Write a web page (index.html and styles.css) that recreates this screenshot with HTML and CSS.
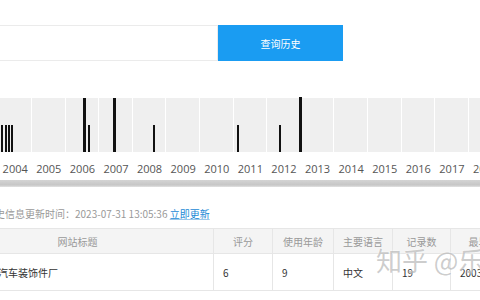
FILE: index.html
```html
<!DOCTYPE html>
<html>
	<head>
		<meta charset="UTF-8"/>
		<title>网站历史查询</title>
		<link rel="stylesheet" href="styles.css">
	</head>
	<body>
		<form class="search" action="./" method="get">
			<input class="search-input" type="text" name="domain" />
			<button class="search-btn" type="button">查询历史</button>
		</form>

		<!-- one column per year, bars placed by their date -->
		<div class="chart">
			<div class="plot">
				<div class="col"></div><div class="col"></div><div class="col"></div>
				<div class="col"></div><div class="col"></div><div class="col"></div>
				<div class="col"></div><div class="col"></div><div class="col"></div>
				<div class="col"></div><div class="col"></div><div class="col"></div>
				<div class="col"></div><div class="col"></div><div class="col"></div>
				<span class="bar" style="left:3px;height:27px"></span>
				<span class="bar" style="left:6.5px;height:27px"></span>
				<span class="bar" style="left:10px;height:27px"></span>
				<span class="bar" style="left:13px;height:27px"></span>
				<span class="bar tall" style="left:84.5px;height:54px"></span>
				<span class="bar" style="left:90px;height:27px"></span>
				<span class="bar tall" style="left:115px;height:54px"></span>
				<span class="bar" style="left:154.5px;height:27px"></span>
				<span class="bar" style="left:238.5px;height:27px"></span>
				<span class="bar" style="left:281px;height:27px"></span>
				<span class="bar tall" style="left:300.5px;height:55px"></span>
			</div>
			<div class="years">
				<span>2004</span><span>2005</span><span>2006</span><span>2007</span><span>2008</span>
				<span>2009</span><span>2010</span><span>2011</span><span>2012</span><span>2013</span>
				<span>2014</span><span>2015</span><span>2016</span><span>2017</span><span>2018</span>
			</div>
		</div>
		<div class="scrollbar"></div>

		<p class="updated">历史信息更新时间：2023-07-31 13:05:36 <a href="#">立即更新</a></p>

		<table class="records">
			<thead>
				<tr>
					<th class="c-title">网站标题</th>
					<th class="c-score">评分</th>
					<th class="c-age">使用年龄</th>
					<th class="c-lang">主要语言</th>
					<th class="c-count">记录数</th>
					<th class="c-first">最早记录</th>
				</tr>
			</thead>
			<tbody>
				<tr>
					<td class="title-cell">县汽车装饰件厂</td>
					<td>6</td>
					<td>9</td>
					<td>中文</td>
					<td>19</td>
					<td>2003</td>
				</tr>
			</tbody>
		</table>

		<div class="watermark">知乎 @乐</div>
	</body>
</html>
```

FILE: styles.css
```css
* {
  box-sizing: border-box;
}

body {
  margin: 0;
  overflow: hidden;
  font-family: "Noto Sans CJK SC", "Noto Sans", sans-serif;
  font-size: 10px;
  color: #333;
  background: #fff;
}

.search {
  display: flex;
  margin: 25px 0 0 -10px;
  height: 36px;
}

.search-input {
  width: 228px;
  height: 36px;
  border: 1px solid #ebebeb;
  outline: none;
}

.search-btn {
  width: 125px;
  height: 36px;
  border: 0;
  background: #1a9cf2;
  color: #fff;
  font-family: "Noto Sans CJK SC", sans-serif;
  font-size: 10px;
}

.chart {
  margin: 37px 0 0 -1.6px;
  width: 504px;
}

.plot {
  position: relative;
  display: flex;
  height: 54px;
}

.col {
  flex: 0 0 33.6px;
  background: #efefef;
  border-right: 1px solid #fff;
}

.bar {
  position: absolute;
  bottom: 0;
  width: 2px;
  background: #111;
}

.bar.tall {
  width: 3px;
}

.years {
  display: flex;
  height: 28px;
  padding-top: 10px;
  line-height: 14px;
  font-family: "Open Sans", sans-serif;
  font-size: 11px;
  color: #555;
}

.years span {
  flex: 0 0 33.6px;
  text-align: center;
}

.scrollbar {
  height: 7px;
  background: linear-gradient(#d4d4d4, #c6c6c6 70%, #e2e2e2);
}

.updated {
  margin: 20px 0 0 -15px;
  line-height: 14px;
  color: #999;
  white-space: nowrap;
}

.updated a {
  color: #1a8ad6;
  text-decoration: underline;
  text-decoration-color: #9cc8ea;
}

.records {
  margin: 7px 0 0 -59px;
  border-collapse: collapse;
  table-layout: fixed;
  width: 585px;
}

.records th,
.records td {
  border: 1px solid #e6e6e6;
  white-space: nowrap;
  overflow: hidden;
}

.records th {
  height: 25px;
  background: #f4f4f4;
  color: #999;
  font-weight: normal;
  text-align: center;
}

.records td {
  height: 37px;
  padding-left: 9px;
  text-align: left;
  color: #333;
}

.records td.title-cell {
  padding-left: 46px;
}

.c-title { width: 272px; }
.c-score { width: 59px; }
.c-age { width: 61px; }
.c-lang { width: 59px; }
.c-count { width: 58px; }
.c-first { width: 76px; }

.watermark {
  position: absolute;
  left: 376px;
  top: 247px;
  font-size: 26px;
  line-height: 1;
  color: rgba(110, 110, 110, 0.35);
  text-shadow: 0 0 2px #fff;
  white-space: nowrap;
}
```
